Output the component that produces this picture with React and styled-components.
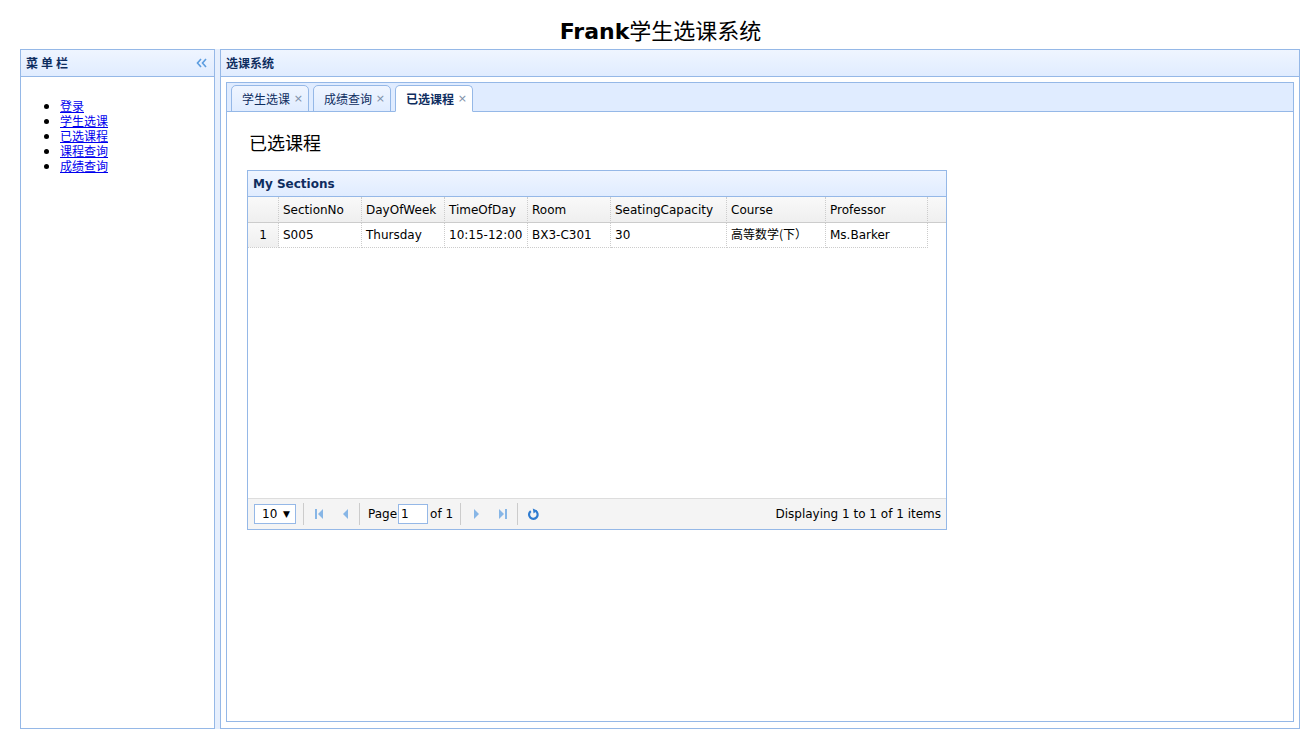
import React from 'react'
import styled, { createGlobalStyle } from 'styled-components'

const GlobalStyle = createGlobalStyle`
  html, body { margin: 0; padding: 0; background: #fff; }
  body {
    font-family: "DejaVu Sans", "Noto Sans CJK SC", sans-serif;
    font-size: 12px;
  }
  * { box-sizing: border-box; }
`

const BORDER = '#95B8E7'
const HEAD_TEXT = '#0E2D5F'

const Page = styled.div`
  width: 1307px;
  height: 736px;
  display: flex;
  flex-direction: column;
`

const Title = styled.div`
  height: 49px;
  padding: 16px 0 0 14px;
  text-align: center;
  font-size: 22px;
  line-height: 26px;
  color: #000;

  b { font-weight: 700; }
  span {
    font-weight: 400;
    font-family: "Noto Sans CJK SC", sans-serif;
  }
`

const Layout = styled.div`
  display: flex;
  height: 680px;
  padding: 0 7px 0 20px;
`

const Panel = styled.div`
  display: flex;
  flex-direction: column;
  border: 1px solid ${BORDER};
  width: ${p => p.$width || 'auto'};
  flex: ${p => (p.$grow ? 1 : 'none')};
  background: #fff;
`

const Splitter = styled.div`
  width: 5px;
  background: #E6EFFD;
`

const PanelHeader = styled.div`
  height: 27px;
  flex: none;
  display: flex;
  align-items: center;
  justify-content: space-between;
  padding: 0 6px 2px 5px;
  border-bottom: 1px solid ${BORDER};
  background: linear-gradient(to bottom, #EFF5FF 0, #E0ECFF 100%);
  color: ${HEAD_TEXT};
  font-weight: 700;
  font-size: 12px;
  letter-spacing: ${p => p.$spaced ? '3px' : '0'};

  svg { margin-top: 2px; }
`

const MenuBody = styled.div`
  flex: 1;
`

const MenuList = styled.ul`
  margin: 21px 0 0;
  padding-left: 39px;
  font-family: "Noto Sans CJK SC", sans-serif;
  font-size: 12px;
  line-height: 15px;

  a { color: #0000EE; text-decoration: underline; }
`

const CenterBody = styled.div`
  flex: 1;
  padding: 5px 5px 6px;
  display: flex;
  flex-direction: column;
`

const Tabs = styled.div`
  flex: 1;
  display: flex;
  flex-direction: column;
`

const TabBar = styled.div`
  height: 30px;
  flex: none;
  display: flex;
  align-items: flex-end;
  gap: 4px;
  padding-left: 4px;
  border: 1px solid ${BORDER};
  background: #E0ECFF;
`

const Tab = styled.div`
  position: relative;
  height: 27px;
  margin-bottom: -1px;
  padding: 0 18px 1px 10px;
  display: flex;
  align-items: center;
  border: 1px solid ${BORDER};
  border-bottom: ${p => p.$active ? '1px solid #fff' : `1px solid ${BORDER}`};
  border-radius: 5px 5px 0 0;
  background: ${p => p.$active ? '#fff' : 'linear-gradient(to bottom, #EFF5FF 0, #E0ECFF 100%)'};
  color: ${HEAD_TEXT};
  font-weight: ${p => p.$active ? 700 : 400};
  font-family: "Noto Sans CJK SC", sans-serif;
  font-size: 12px;
`

const Close = styled.span`
  position: absolute;
  right: 5px;
  top: 6px;
  font-family: "DejaVu Sans", sans-serif;
  font-size: 11px;
  font-weight: 400;
  color: #7d8ea8;
`

const TabBody = styled.div`
  flex: 1;
  border: 1px solid ${BORDER};
  border-top: none;
  padding: 18px 20px 20px;
`

const Heading = styled.h3`
  margin: 0 0 16px 2px;
  font-size: 18px;
  line-height: 24px;
  font-weight: 400;
  font-family: "Noto Sans CJK SC", serif;
  color: #000;
`

const Grid = styled.div`
  width: 700px;
  height: 360px;
  border: 1px solid ${BORDER};
  display: flex;
  flex-direction: column;
`

const GridTitle = styled.div`
  height: 26px;
  flex: none;
  display: flex;
  align-items: center;
  padding-left: 5px;
  border-bottom: 1px solid ${BORDER};
  background: linear-gradient(to bottom, #EFF5FF 0, #E0ECFF 100%);
  color: ${HEAD_TEXT};
  font-weight: 700;
`

const GridTable = styled.div`
  display: grid;
  grid-template-columns: 31px 83px 83px 83px 83px 116px 99px 102px 1fr;
`

const HeadCell = styled.div`
  height: 26px;
  display: flex;
  align-items: center;
  padding-left: 4px;
  border-bottom: 1px solid #ccc;
  border-right: ${p => p.$last ? 'none' : '1px dotted #ccc'};
  background: linear-gradient(to bottom, #F9F9F9 0, #EFEFEF 100%);
  color: #000;
  white-space: nowrap;
`

const Cell = styled.div`
  height: 25px;
  display: flex;
  align-items: center;
  justify-content: ${p => p.$center ? 'center' : 'flex-start'};
  padding-left: ${p => p.$center ? '0' : '4px'};
  border-bottom: ${p => p.$empty ? 'none' : '1px dotted #ccc'};
  border-right: ${p => p.$empty ? 'none' : '1px dotted #ccc'};
  background: ${p => p.$num ? 'linear-gradient(to bottom, #F9F9F9 0, #EFEFEF 100%)' : '#fff'};
  white-space: nowrap;
  overflow: hidden;
  color: #000;

  span {
    font-family: "Noto Sans CJK SC", sans-serif;
    line-height: 14px;
    margin-top: -2px;
  }
`

const GridBody = styled.div`
  flex: 1;
`

const Pager = styled.div`
  height: 31px;
  flex: none;
  display: flex;
  align-items: center;
  padding: 0 5px 0 6px;
  border-top: 1px solid #ddd;
  background: #F4F4F4;
  color: #000;
`

const Select = styled.div`
  width: 42px;
  height: 20px;
  display: flex;
  align-items: center;
  justify-content: space-between;
  padding: 0 5px 0 7px;
  border: 1px solid ${BORDER};
  background: #fff;
  font-size: 12px;
  margin-right: 7px;
`

const Caret = styled.span`
  font-size: 9px;
`

const Sep = styled.div`
  width: 1px;
  height: 22px;
  background: #ccc;
  margin: 0 ${p => p.$r ?? 7}px 0 ${p => p.$l ?? 0}px;
`

const IconBtn = styled.div`
  width: 26px;
  height: 22px;
  display: flex;
  align-items: center;
  justify-content: center;
`

const PageInput = styled.div`
  width: 30px;
  height: 20px;
  margin: 0 2px 0 1px;
  border: 1px solid ${BORDER};
  background: #fff;
  padding-left: 2px;
  display: flex;
  align-items: center;
`

const Info = styled.div`
  margin-left: auto;
`

const LIGHT = '#87B6E6'

function First({ flip }) {
  return (
    <svg width="10" height="12" viewBox="0 0 10 12" style={flip ? { transform: 'scaleX(-1)' } : undefined}>
      <rect x="1" y="1" width="2" height="10" fill={LIGHT} />
      <path d="M9 1 L9 11 L4 6 Z" fill={LIGHT} />
    </svg>
  )
}

function Prev({ flip }) {
  return (
    <svg width="8" height="12" viewBox="0 0 8 12" style={flip ? { transform: 'scaleX(-1)' } : undefined}>
      <path d="M7 1 L7 11 L2 6 Z" fill={LIGHT} />
    </svg>
  )
}

function Refresh() {
  return (
    <svg width="13" height="13" viewBox="0 0 13 13">
      <path d="M8.6 2.9 A4.3 4.3 0 1 1 3.8 3.1" fill="none" stroke="#2E7BD0" strokeWidth="2.2" />
      <path d="M5.8 0.4 L10.2 2.4 L6.6 5.6 Z" fill="#2E7BD0" />
    </svg>
  )
}

function Collapse() {
  return (
    <svg width="12" height="10" viewBox="0 0 12 10">
      <path d="M5 1 L1.5 5 L5 9 M10 1 L6.5 5 L10 9" fill="none" stroke="#5C9DE0" strokeWidth="1.6" />
    </svg>
  )
}

const columns = ['SectionNo', 'DayOfWeek', 'TimeOfDay', 'Room', 'SeatingCapacity', 'Course', 'Professor']
const rows = [
  ['S005', 'Thursday', '10:15-12:00', 'BX3-C301', '30', '高等数学(下）', 'Ms.Barker'],
]
const menu = ['登录', '学生选课', '已选课程', '课程查询', '成绩查询']
const tabs = [
  { name: '学生选课' },
  { name: '成绩查询' },
  { name: '已选课程', active: true },
]

export default function App() {
  return (
    <Page>
      <GlobalStyle />
      <Title><b>Frank</b><span>学生选课系统</span></Title>
      <Layout>
        <Panel $width="195px">
          <PanelHeader $spaced>菜单栏<Collapse /></PanelHeader>
          <MenuBody>
            <MenuList>
              {menu.map(m => <li key={m}><a href="#">{m}</a></li>)}
            </MenuList>
          </MenuBody>
        </Panel>
        <Splitter />
        <Panel $grow>
          <PanelHeader>选课系统</PanelHeader>
          <CenterBody>
            <Tabs>
              <TabBar>
                {tabs.map(t => (
                  <Tab key={t.name} $active={t.active}>
                    {t.name}
                    <Close>×</Close>
                  </Tab>
                ))}
              </TabBar>
              <TabBody>
                <Heading>已选课程</Heading>
                <Grid>
                  <GridTitle>My Sections</GridTitle>
                  <GridTable>
                    <HeadCell />
                    {columns.map(c => <HeadCell key={c}>{c}</HeadCell>)}
                    <HeadCell $last />
                    {rows.map((r, i) => (
                      <React.Fragment key={i}>
                        <Cell $center $num>{i + 1}</Cell>
                        {r.map((v, j) => (
                          <Cell key={j}>{/[\u4e00-\u9fff]/.test(v) ? <span>{v}</span> : v}</Cell>
                        ))}
                        <Cell $empty />
                      </React.Fragment>
                    ))}
                  </GridTable>
                  <GridBody />
                  <Pager>
                    <Select>10<Caret>▼</Caret></Select>
                    <Sep $r={2} />
                    <IconBtn><First /></IconBtn>
                    <IconBtn><Prev /></IconBtn>
                    <Sep $l={1} $r={8} />
                    <span>Page</span>
                    <PageInput>1</PageInput>
                    <span>of 1</span>
                    <Sep $l={7} $r={3} />
                    <IconBtn><Prev flip /></IconBtn>
                    <IconBtn><First flip /></IconBtn>
                    <Sep $l={1} $r={2} />
                    <IconBtn><Refresh /></IconBtn>
                    <Info>Displaying 1 to 1 of 1 items</Info>
                  </Pager>
                </Grid>
              </TabBody>
            </Tabs>
          </CenterBody>
        </Panel>
      </Layout>
    </Page>
  )
}
